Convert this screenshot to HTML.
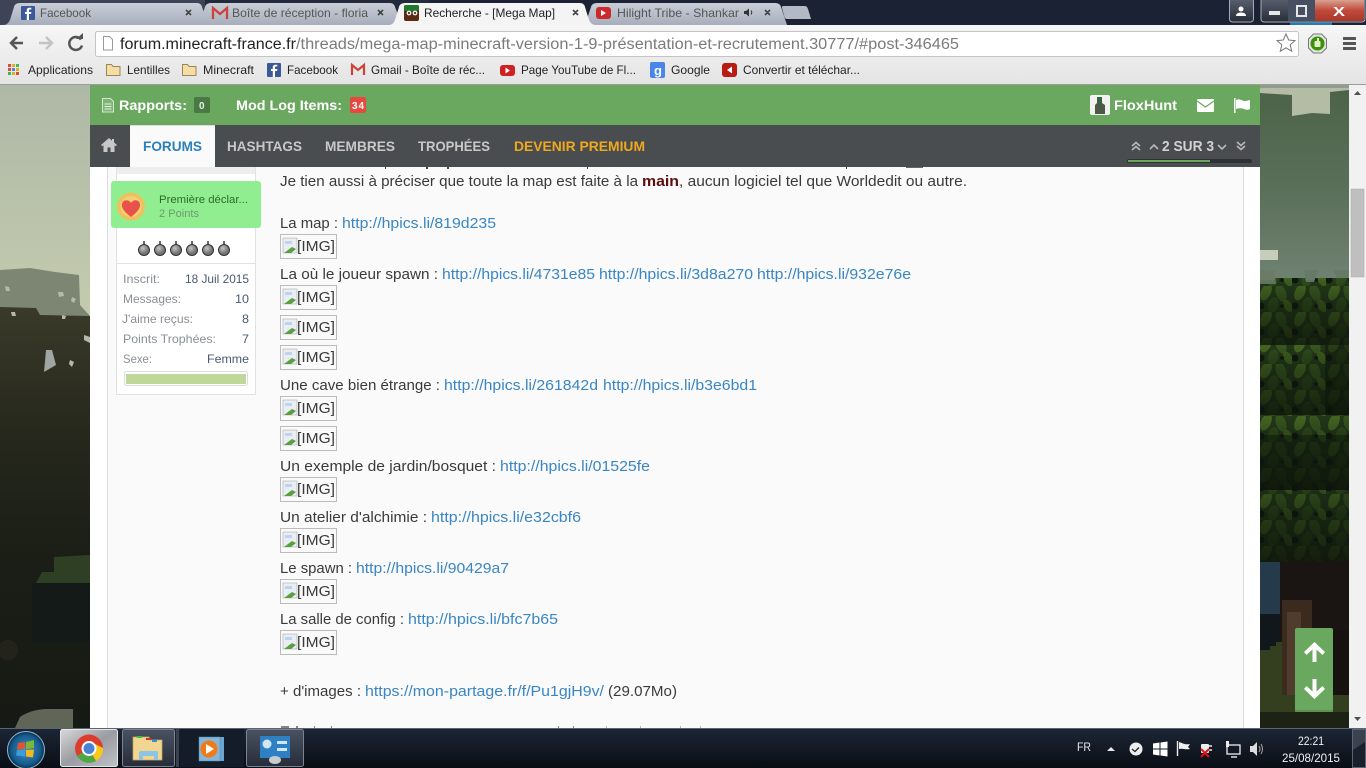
<!DOCTYPE html>
<html lang="fr"><head><meta charset="utf-8"><title>Recherche - [Mega Map]</title>
<style>
html,body{margin:0;padding:0;width:1366px;height:768px;overflow:hidden;background:#222}
svg{position:absolute;left:0;top:0;display:block}
text{font-family:"Liberation Sans","DejaVu Sans",sans-serif;white-space:pre}
.b{font-size:15px;fill:#3a3a3a}
.l{font-size:15px;fill:#3a86c2}
.s{font-size:12px;fill:#8a8f96}
.v{font-size:12px;fill:#4a5a70}
.t{font-size:12px;fill:#555}
.k{font-size:12px;fill:#222}
.h{font-size:14px;font-weight:bold;fill:#fff}
.n{font-size:14px;font-weight:bold;fill:#c8c8c8}
</style></head><body>
<svg width="1366" height="768" viewBox="0 0 1366 768" xmlns="http://www.w3.org/2000/svg">
<defs>
<linearGradient id="tab" x1="0" y1="0" x2="0" y2="1"><stop offset="0" stop-color="#c9ced8"/><stop offset="1" stop-color="#a7aebb"/></linearGradient>
<linearGradient id="tool" x1="0" y1="0" x2="0" y2="1"><stop offset="0" stop-color="#f6f6f6"/><stop offset="1" stop-color="#e4e4e4"/></linearGradient>
<linearGradient id="sky" x1="0" y1="0" x2="0" y2="1"><stop offset="0" stop-color="#aeb8a6"/><stop offset="1" stop-color="#c4cbae"/></linearGradient>
<linearGradient id="dark" x1="0" y1="0" x2="0" y2="1"><stop offset="0" stop-color="#3a3a2a"/><stop offset=".3" stop-color="#26281c"/><stop offset=".6" stop-color="#1b1e16"/><stop offset="1" stop-color="#161a14"/></linearGradient>
<linearGradient id="fog" x1="0" y1="0" x2="0" y2="1"><stop offset="0" stop-color="#4b6248"/><stop offset=".55" stop-color="#5b7059"/><stop offset="1" stop-color="#6f8272"/></linearGradient>
<linearGradient id="shade" x1="0" y1="0" x2="0" y2="1"><stop offset="0" stop-color="#0c140a" stop-opacity=".05"/><stop offset=".35" stop-color="#0c140a" stop-opacity=".4"/><stop offset="1" stop-color="#0c140a" stop-opacity=".8"/></linearGradient>
<linearGradient id="task" x1="0" y1="0" x2="0" y2="1"><stop offset="0" stop-color="#1c2635"/><stop offset="1" stop-color="#0a0e15"/></linearGradient>
<linearGradient id="tb" x1="0" y1="0" x2="1" y2="1"><stop offset="0" stop-color="#d8d8d8"/><stop offset=".5" stop-color="#9a9ca2"/><stop offset="1" stop-color="#c0c2c6"/></linearGradient>
<linearGradient id="tb2" x1="0" y1="0" x2="0" y2="1"><stop offset="0" stop-color="#4a5160"/><stop offset="1" stop-color="#262c3a"/></linearGradient>
<linearGradient id="close" x1="0" y1="0" x2="0" y2="1"><stop offset="0" stop-color="#d8a090"/><stop offset=".5" stop-color="#c2493a"/><stop offset="1" stop-color="#a8382c"/></linearGradient>
<linearGradient id="win" x1="0" y1="0" x2="0" y2="1"><stop offset="0" stop-color="#5a6270"/><stop offset="1" stop-color="#272d38"/></linearGradient>
<radialGradient id="orb"><stop offset="0" stop-color="#3f8fc8"/><stop offset=".8" stop-color="#145a8c"/><stop offset="1" stop-color="#0b2b45"/></radialGradient>
<radialGradient id="bomb" cx=".4" cy=".35"><stop offset="0" stop-color="#c4c4c4"/><stop offset="1" stop-color="#707070"/></radialGradient>
<pattern id="lp" width="34" height="26" patternUnits="userSpaceOnUse">
<rect width="34" height="26" fill="#24391a"/>
<ellipse cx="8" cy="6" rx="5" ry="9" transform="rotate(25 8 6)" fill="#476a22"/>
<ellipse cx="23" cy="7" rx="5" ry="9" transform="rotate(-20 23 7)" fill="#3a5a20"/>
<ellipse cx="15" cy="19" rx="5" ry="8" transform="rotate(15 15 19)" fill="#304e1c"/>
<ellipse cx="30" cy="20" rx="4" ry="7" transform="rotate(-30 30 20)" fill="#41621f"/>
<circle cx="3" cy="20" r="3.500" fill="#0e170d"/>
<circle cx="24" cy="20" r="2" fill="#101a0e"/>
</pattern>
<g id="ico"><rect x="0" y="0" width="14" height="15" fill="#e8eef4" stroke="#aaa" stroke-width=".6"/><path d="M1 15 L9 9 L13 11 L8 15Z" fill="#58a03c"/><path d="M2 3h7v3H2z" fill="#bcd4ee"/></g>
</defs>

<!-- background left -->
<rect x="0" y="85" width="90" height="232" fill="url(#sky)"/>
<path d="M0 270 L30 268 L55 272 L79 275 L80 305 L90 316 L0 316Z" fill="#7d8672"/>
<path d="M0 307 L36 308 L40 315 L90 316 V728 H0Z" fill="url(#dark)"/>
<path d="M46 350 L52 350 L56 365 L44 372 Z" fill="#9ea7a2"/>
<path d="M5 286l4 1 1 4-4 0z M58 292l5 0 1 4-5 1z M72 297l4 2-2 4-3-2z M11 312l4 0 1 4-4 0z M62 315l4 1-1 3-3 0z M84 335l6 2 0 6-6-3z M70 360l4 2-2 5-3-3z" fill="#b4baa9"/>
<path d="M54 557 L90 555 L90 583 L36 583 L42 572 L54 572Z" fill="#2e3f24"/>
<rect x="32" y="583" width="58" height="60" fill="#141a17"/>
<path d="M15 728 L20 717 Q30 710 45 709 L73 709 L73 728Z" fill="#5f6657"/>
<circle cx="8" cy="650" r="10" fill="#24231a"/>

<!-- background right -->
<rect x="1260" y="85" width="89" height="645" fill="#1b2418"/>
<rect x="1260" y="85" width="89" height="195" fill="url(#fog)"/>
<path d="M1260 85H1349V90L1330 92V114L1312 113L1292 116V95L1260 93Z" fill="#b5bca6"/>
<path d="M1260 85H1349V88H1260Z" fill="#8f9c8e"/>
<rect x="1260" y="250" width="18" height="10" fill="#c6cdb8"/>
<rect x="1260" y="278" width="89" height="284" fill="url(#lp)"/>
<path d="M1260 270h14l2 14-16 0z" fill="#6a7c66"/>
<path d="M1304 270h14l-4 12h-8zM1333 270h16v8h-12z" fill="#667a66"/>
<rect x="1260" y="280" width="89" height="65" fill="url(#shade)"/>
<rect x="1260" y="345" width="89" height="70" fill="url(#shade)"/>
<rect x="1325" y="345" width="24" height="70" fill="#0c140a" opacity=".5"/>
<rect x="1260" y="415" width="89" height="75" fill="url(#shade)"/>
<rect x="1260" y="435" width="89" height="55" fill="#0c140a" opacity=".45"/>
<rect x="1260" y="490" width="89" height="72" fill="url(#shade)"/>
<rect x="1260" y="490" width="89" height="72" fill="#0c140a" opacity=".25"/>
<rect x="1260" y="562" width="20" height="52" fill="#253b4c"/>
<rect x="1260" y="614" width="20" height="36" fill="#10181c"/>
<rect x="1280" y="562" width="69" height="100" fill="#1a1513"/>
<path d="M1260 650h10v-4h6v-4h6v53h67v33h-89z" fill="#343f1f"/>
<rect x="1282" y="600" width="30" height="95" fill="#3b2a1e"/>
<rect x="1287" y="612" width="14" height="83" fill="#4f3c2c"/>
<rect x="1312" y="630" width="37" height="65" fill="#17120f"/>
<rect x="1260" y="712" width="89" height="16" fill="#1c2314"/>

<!-- forum column -->
<rect x="90" y="85" width="1170" height="643" fill="#fff"/>
<rect x="108" y="167" width="1135" height="561" fill="#fafafa"/>
<rect x="107" y="167" width="1" height="561" fill="#ddd"/>
<rect x="1243" y="167" width="1" height="561" fill="#ddd"/>

<!-- sidebar card -->
<rect x="116.500" y="167.500" width="139" height="227" fill="#fff" stroke="#e2e2e2"/>
<rect x="117" y="167" width="138" height="7" fill="#eeeeee"/>
<rect x="111" y="181" width="150" height="47" rx="3" fill="#90ee90"/>
<circle cx="131" cy="206.500" r="14" fill="#edc25d"/>
<circle cx="131" cy="206.500" r="10.500" fill="#f3cf73"/>
<path d="M131 217 C122 210 122 207 122 205 C122 199 129 199 131 203 C133 199 140 199 140 205 C140 207 140 210 131 217Z" fill="#e7524c"/>
<text x="159" y="203" font-size="11" fill="#2c6a2e" textLength="89" lengthAdjust="spacingAndGlyphs">Première déclar...</text>
<text x="159" y="217" font-size="11" fill="#6f9a6f" textLength="40" lengthAdjust="spacingAndGlyphs">2 Points</text>
<g fill="url(#bomb)" stroke="#333" stroke-width="1">
<circle cx="144" cy="250" r="5.500"/><circle cx="160" cy="250" r="5.500"/><circle cx="176" cy="250" r="5.500"/><circle cx="192" cy="250" r="5.500"/><circle cx="208" cy="250" r="5.500"/><circle cx="224" cy="250" r="5.500"/>
</g>
<g stroke="#333" stroke-width="1.500"><path d="M144 244v-3M160 244v-3M176 244v-3M192 244v-3M208 244v-3M224 244v-3"/></g>
<rect x="117" y="263" width="138" height="1" fill="#e2e2e2"/>
<text class="s" x="123" y="283" textLength="37" lengthAdjust="spacingAndGlyphs">Inscrit:</text>
<text class="v" x="185" y="283" textLength="64" lengthAdjust="spacingAndGlyphs">18 Juil 2015</text>
<text class="s" x="123" y="303" textLength="58" lengthAdjust="spacingAndGlyphs">Messages:</text>
<text class="v" x="235" y="303" textLength="14" lengthAdjust="spacingAndGlyphs">10</text>
<text class="s" x="122" y="323" textLength="71" lengthAdjust="spacingAndGlyphs">J'aime reçus:</text>
<text class="v" x="242" y="323" textLength="7" lengthAdjust="spacingAndGlyphs">8</text>
<text class="s" x="123" y="343" textLength="93" lengthAdjust="spacingAndGlyphs">Points Trophées:</text>
<text class="v" x="242" y="343" textLength="7" lengthAdjust="spacingAndGlyphs">7</text>
<text class="s" x="123" y="363" textLength="29" lengthAdjust="spacingAndGlyphs">Sexe:</text>
<text class="v" x="207" y="363" textLength="42" lengthAdjust="spacingAndGlyphs">Femme</text>
<rect x="124.500" y="371.500" width="123" height="14" rx="2" fill="#fff" stroke="#ddd"/>
<rect x="126" y="374" width="120" height="10" fill="#bfd89a"/>

<!-- post text -->
<g fill="#444"><rect x="385" y="167" width="1" height="2"/><rect x="426" y="167" width="2" height="2"/><rect x="447" y="167" width="2" height="2"/><rect x="587" y="167" width="1" height="2"/><rect x="846" y="167" width="1" height="2"/></g>
<rect x="906" y="167" width="17" height="1" fill="#666"/>
<text class="b" x="280" y="186" textLength="358" lengthAdjust="spacingAndGlyphs">Je tien aussi à préciser que toute la map est faite à la</text>
<text class="b" x="642" y="186" textLength="37" lengthAdjust="spacingAndGlyphs" font-weight="bold" style="fill:#5a0f0f">main</text>
<text class="b" x="679" y="186" textLength="288" lengthAdjust="spacingAndGlyphs">, aucun logiciel tel que Worldedit ou autre.</text>

<text class="b" x="280" y="228" textLength="58" lengthAdjust="spacingAndGlyphs">La map :</text>
<text class="l" x="342" y="228" textLength="154" lengthAdjust="spacingAndGlyphs">http://hpics.li/819d235</text>
<text class="b" x="280" y="279" textLength="158" lengthAdjust="spacingAndGlyphs">La où le joueur spawn :</text>
<text class="l" x="442" y="279" textLength="153" lengthAdjust="spacingAndGlyphs">http://hpics.li/4731e85</text>
<text class="l" x="599" y="279" textLength="154" lengthAdjust="spacingAndGlyphs">http://hpics.li/3d8a270</text>
<text class="l" x="757" y="279" textLength="154" lengthAdjust="spacingAndGlyphs">http://hpics.li/932e76e</text>
<text class="b" x="280" y="390" textLength="160" lengthAdjust="spacingAndGlyphs">Une cave bien étrange :</text>
<text class="l" x="444" y="390" textLength="154" lengthAdjust="spacingAndGlyphs">http://hpics.li/261842d</text>
<text class="l" x="603" y="390" textLength="154" lengthAdjust="spacingAndGlyphs">http://hpics.li/b3e6bd1</text>
<text class="b" x="280" y="471" textLength="216" lengthAdjust="spacingAndGlyphs">Un exemple de jardin/bosquet :</text>
<text class="l" x="500" y="471" textLength="150" lengthAdjust="spacingAndGlyphs">http://hpics.li/01525fe</text>
<text class="b" x="280" y="522" textLength="147" lengthAdjust="spacingAndGlyphs">Un atelier d'alchimie :</text>
<text class="l" x="431" y="522" textLength="150" lengthAdjust="spacingAndGlyphs">http://hpics.li/e32cbf6</text>
<text class="b" x="280" y="573" textLength="72" lengthAdjust="spacingAndGlyphs">Le spawn :</text>
<text class="l" x="356" y="573" textLength="153" lengthAdjust="spacingAndGlyphs">http://hpics.li/90429a7</text>
<text class="b" x="280" y="624" textLength="124" lengthAdjust="spacingAndGlyphs">La salle de config :</text>
<text class="l" x="408" y="624" textLength="150" lengthAdjust="spacingAndGlyphs">http://hpics.li/bfc7b65</text>
<text class="b" x="280" y="696" textLength="81" lengthAdjust="spacingAndGlyphs">+ d'images :</text>
<text class="l" x="365" y="696" textLength="239" lengthAdjust="spacingAndGlyphs">https://mon-partage.fr/f/Pu1gjH9v/</text>
<text class="b" x="608" y="696" textLength="69" lengthAdjust="spacingAndGlyphs">(29.07Mo)</text>
<g fill="#555" opacity=".7"><rect x="281" y="726" width="8" height="2"/><rect x="296" y="726" width="2" height="2"/><rect x="314" y="726" width="1" height="2"/><rect x="331" y="726" width="1" height="2"/><rect x="558" y="726" width="1" height="2"/><rect x="573" y="726" width="1" height="2"/></g>
<g fill="#9abbd8"><rect x="606" y="726" width="1" height="2"/><rect x="640" y="726" width="1" height="2"/><rect x="680" y="726" width="1" height="2"/><rect x="700" y="726" width="1" height="2"/></g>

<!-- broken images -->
<g id="imgs">
<g transform="translate(0,234)"><rect x="280.500" y=".5" width="56" height="24" fill="#fafafa" stroke="#bbb"/><use href="#ico" x="283" y="4"/><text class="b" x="297" y="17" textLength="38" lengthAdjust="spacingAndGlyphs">[IMG]</text></g>
<g transform="translate(0,285)"><rect x="280.500" y=".5" width="56" height="24" fill="#fafafa" stroke="#bbb"/><use href="#ico" x="283" y="4"/><text class="b" x="297" y="17" textLength="38" lengthAdjust="spacingAndGlyphs">[IMG]</text></g>
<g transform="translate(0,315)"><rect x="280.500" y=".5" width="56" height="24" fill="#fafafa" stroke="#bbb"/><use href="#ico" x="283" y="4"/><text class="b" x="297" y="17" textLength="38" lengthAdjust="spacingAndGlyphs">[IMG]</text></g>
<g transform="translate(0,345)"><rect x="280.500" y=".5" width="56" height="24" fill="#fafafa" stroke="#bbb"/><use href="#ico" x="283" y="4"/><text class="b" x="297" y="17" textLength="38" lengthAdjust="spacingAndGlyphs">[IMG]</text></g>
<g transform="translate(0,396)"><rect x="280.500" y=".5" width="56" height="24" fill="#fafafa" stroke="#bbb"/><use href="#ico" x="283" y="4"/><text class="b" x="297" y="17" textLength="38" lengthAdjust="spacingAndGlyphs">[IMG]</text></g>
<g transform="translate(0,426)"><rect x="280.500" y=".5" width="56" height="24" fill="#fafafa" stroke="#bbb"/><use href="#ico" x="283" y="4"/><text class="b" x="297" y="17" textLength="38" lengthAdjust="spacingAndGlyphs">[IMG]</text></g>
<g transform="translate(0,477)"><rect x="280.500" y=".5" width="56" height="24" fill="#fafafa" stroke="#bbb"/><use href="#ico" x="283" y="4"/><text class="b" x="297" y="17" textLength="38" lengthAdjust="spacingAndGlyphs">[IMG]</text></g>
<g transform="translate(0,528)"><rect x="280.500" y=".5" width="56" height="24" fill="#fafafa" stroke="#bbb"/><use href="#ico" x="283" y="4"/><text class="b" x="297" y="17" textLength="38" lengthAdjust="spacingAndGlyphs">[IMG]</text></g>
<g transform="translate(0,579)"><rect x="280.500" y=".5" width="56" height="24" fill="#fafafa" stroke="#bbb"/><use href="#ico" x="283" y="4"/><text class="b" x="297" y="17" textLength="38" lengthAdjust="spacingAndGlyphs">[IMG]</text></g>
<g transform="translate(0,630)"><rect x="280.500" y=".5" width="56" height="24" fill="#fafafa" stroke="#bbb"/><use href="#ico" x="283" y="4"/><text class="b" x="297" y="17" textLength="38" lengthAdjust="spacingAndGlyphs">[IMG]</text></g>
</g>

<!-- green header -->
<rect x="90" y="85" width="1170" height="40" fill="#6aa75f"/>
<path d="M102.500 98.500h8l3 3v10.500h-11z" fill="#7fb574" stroke="#d5e6d0"/>
<path d="M104.500 104h7M104.500 106.500h7M104.500 109h7" stroke="#e6f0e3" stroke-width="1"/>
<text class="h" x="119" y="110" textLength="68" lengthAdjust="spacingAndGlyphs">Rapports:</text>
<rect x="194" y="97" width="16" height="16" rx="2" fill="#4a7a44"/>
<text x="199" y="109" font-size="10" font-weight="bold" fill="#e8f0e6">0</text>
<text class="h" x="236" y="110" textLength="106" lengthAdjust="spacingAndGlyphs">Mod Log Items:</text>
<rect x="350" y="97" width="16" height="16" rx="2" fill="#e8493e"/>
<text x="352" y="109" font-size="10" font-weight="bold" fill="#fff" textLength="12">34</text>
<rect x="1090" y="95" width="20" height="20" rx="2" fill="#f2f2f2"/>
<path d="M1097 97h5v6l3 2v9h-10v-9l2-2z" fill="#4a5a44"/>
<rect x="1098" y="97" width="3" height="5" fill="#2d6b3a"/>
<text class="h" x="1114" y="110" textLength="63" lengthAdjust="spacingAndGlyphs">FloxHunt</text>
<rect x="1197" y="99" width="17" height="13" rx="1" fill="#fff"/>
<path d="M1197 101l8.500 6 8.500-6" fill="none" stroke="#6aa75f" stroke-width="1.200"/>
<rect x="1234" y="98" width="1.500" height="15" fill="#fff"/>
<path d="M1236 100c4-2 6 1 9 1 2 0 4-1 5-1v9c-2 1-4 1-6 0-3-1-5-1-8 0z" fill="#fff"/>

<!-- nav -->
<rect x="90" y="125" width="1170" height="42" fill="#4a4d50"/>
<path d="M109 138l-8 7 1.300 1.200 1.200-1v6.800h4v-4.500h3v4.500h4v-6.800l1.200 1 1.300-1.200-3-2.600v-3.400h-2v1.700z" fill="#c8c8c8"/>
<rect x="130" y="125" width="85" height="42" fill="#fafafa"/>
<rect x="130" y="125" width="85" height="1" fill="#ddd"/>
<text class="n" x="143" y="151" textLength="59" lengthAdjust="spacingAndGlyphs" style="fill:#2b7fbe">FORUMS</text>
<text class="n" x="227" y="151" textLength="75" lengthAdjust="spacingAndGlyphs">HASHTAGS</text>
<text class="n" x="325" y="151" textLength="70" lengthAdjust="spacingAndGlyphs">MEMBRES</text>
<text class="n" x="418" y="151" textLength="72" lengthAdjust="spacingAndGlyphs">TROPHÉES</text>
<text class="n" x="514" y="151" textLength="131" lengthAdjust="spacingAndGlyphs" style="fill:#f0a81e">DEVENIR PREMIUM</text>
<g fill="none" stroke="#b8b8b8" stroke-width="1.600">
<path d="M1132 146l4-3.500 4 3.500M1132 150l4-3.500 4 3.500"/>
<path d="M1150 149l4-4 4 4"/>
<path d="M1218 145l4 4 4-4"/>
<path d="M1237 142l4 3.500 4-3.500M1237 146l4 3.500 4-3.500"/>
</g>
<text x="1162" y="151" font-size="14.500" font-weight="bold" fill="#d2d2d2" textLength="52" lengthAdjust="spacingAndGlyphs">2 SUR 3</text>
<rect x="1127" y="159" width="125" height="4" rx="2" fill="#2f3234"/>
<rect x="1128" y="160" width="82" height="2" fill="#6aa75f"/>

<!-- up/down button -->
<rect x="1295" y="628" width="38" height="84" rx="2" fill="#6aa75f"/>
<rect x="1295" y="710" width="38" height="2" fill="#5c9152"/>
<path d="M1314.500 642l-10.500 10 2.500 3 6-5.500v12.500h4v-12.500l6 5.500 2.500-3z" fill="#fff"/>
<path d="M1314.500 699l-10.500-10 2.500-3 6 5.500v-12.500h4v12.500l6-5.500 2.500 3z" fill="#fff"/>

<!-- scrollbar -->
<rect x="1349" y="85" width="17" height="643" fill="#f1f1f1"/>
<rect x="1351" y="189" width="13" height="88" fill="#bfbfbf" stroke="#aaa" stroke-width=".5"/>
<path d="M1354 95l3.500-4 3.500 4z" fill="#505050"/>
<path d="M1354 717l3.500 4 3.500-4z" fill="#505050"/>

<!-- browser top -->
<rect x="0" y="0" width="1366" height="25" fill="#1a2233"/>
<path d="M0 0H205V25H0Z" fill="#3c4456"/>
<path d="M205 0H430V25H205Z" fill="#232a3c"/>
<path d="M3 25Q8 25 10 20L14 7Q15 3 20 3H197Q201 3 202 7L208 25Z" fill="url(#tab)"/>
<path d="M199 25L205 7Q206 3 211 3H390Q394 3 395 7L402 25Z" fill="url(#tab)"/>
<path d="M585 25L591 7Q592 3 597 3H775Q780 3 781 7L787 25Z" fill="url(#tab)"/>
<path d="M783 6h22q2 0 3 3l3 10h-24q-2 0-2.500-2l-2.500-9q0-2 1-2z" fill="#b4bac5"/>
<path d="M389 25Q393 25 395 20L399 7Q400 3 405 3H580Q584 3 585 7L589 20Q591 25 596 25Z" fill="#f4f4f4"/>
<rect x="21" y="6" width="14" height="14" rx="1" fill="#3b5998"/><path d="M29 20v-6h2l.4-2H29v-1.500c0-.7.3-1 1-1h1.300V7.700H29.500c-1.800 0-2.700 1-2.700 2.700V12H25v2h1.800v6z" fill="#fff"/>
<text class="t" x="40" y="17" textLength="51" lengthAdjust="spacingAndGlyphs">Facebook</text>
<path d="M186 10l5 5M191 10l-5 5M378 10l5 5M383 10l-5 5M573 10l5 5M578 10l-5 5M765 10l5 5M770 10l-5 5" stroke="#444" stroke-width="1.600"/>
<path d="M213 19V8l7 6 7-6v11" fill="none" stroke="#c9433a" stroke-width="2.300"/>
<text class="t" x="232" y="17" textLength="136" lengthAdjust="spacingAndGlyphs">Boîte de réception - floria</text>
<rect x="404" y="5" width="15" height="16" rx="2" fill="#5c2a12"/><rect x="404" y="5" width="15" height="6" rx="2" fill="#1f7a2e"/><circle cx="409" cy="13" r="2.400" fill="#eee"/><circle cx="415" cy="13" r="2.400" fill="#eee"/><circle cx="409" cy="13" r="1" fill="#111"/><circle cx="415" cy="13" r="1" fill="#111"/>
<text class="k" x="424" y="17" textLength="131" lengthAdjust="spacingAndGlyphs">Recherche - [Mega Map]</text>
<rect x="596" y="7" width="15" height="12" rx="3" fill="#cc2a2a"/><path d="M601 10l5 3-5 3z" fill="#fff"/>
<text class="t" x="617" y="17" textLength="122" lengthAdjust="spacingAndGlyphs">Hilight Tribe - Shankar</text>
<path d="M744 11h2l3-2.500v8l-3-2.500h-2z" fill="#333"/><path d="M751 10.500q1.500 2 0 4" stroke="#333" fill="none"/>

<!-- window buttons -->
<rect x="1229.500" y="-2" width="24" height="24" rx="3" fill="url(#win)" stroke="#a5abb5"/>
<circle cx="1241" cy="9" r="2.500" fill="#fff"/><path d="M1236 16q0-3.500 5-3.500t5 3.500z" fill="#fff"/>
<rect x="1261" y="-2" width="104" height="24" rx="3" fill="url(#win)" stroke="#a5abb5"/>
<rect x="1288" y="0" width="27" height="21" fill="#465062"/>
<rect x="1315" y="0" width="49" height="21" fill="url(#close)"/>
<rect x="1290" y="22" width="42" height="3" fill="#3f9bd8" opacity=".7"/>
<rect x="1269" y="11" width="11" height="4" fill="#e6e6e6"/>
<rect x="1297" y="6" width="9" height="10" fill="none" stroke="#e6e6e6" stroke-width="2"/>
<text x="1333" y="16" font-size="13" font-weight="bold" fill="#fff" textLength="12" lengthAdjust="spacingAndGlyphs">X</text>

<!-- toolbar -->
<rect x="0" y="25" width="1366" height="59" fill="url(#tool)"/>
<rect x="0" y="84" width="1366" height="1" fill="#9d9d9d"/>
<path d="M23 43H12M17 37l-6 6 6 6" fill="none" stroke="#555" stroke-width="2.500"/>
<path d="M39 43h11M46 37l6 6-6 6" fill="none" stroke="#c4c4c4" stroke-width="2.500"/>
<path d="M81 39.500a6.500 6.500 0 1 0 1 6" fill="none" stroke="#555" stroke-width="2.500"/><path d="M76 39h7v-6z" fill="#555"/>
<rect x="95.500" y="31.500" width="1203" height="25" rx="2" fill="#fff" stroke="#c4c4c4"/>
<path d="M103.500 36.500h6l3 3v10.500h-9z" fill="#fff" stroke="#999"/>
<text x="120" y="49" font-size="15.500" fill="#222" textLength="176" lengthAdjust="spacingAndGlyphs">forum.minecraft-france.fr</text>
<text x="296" y="49" font-size="15.500" fill="#7b7b7b" textLength="663" lengthAdjust="spacingAndGlyphs">/threads/mega-map-minecraft-version-1-9-présentation-et-recrutement.30777/#post-346465</text>
<path d="M1286 34l2.700 6 6.300.6-4.800 4.200 1.500 6.400-5.700-3.400-5.700 3.400 1.500-6.400-4.800-4.200 6.300-.6z" fill="#fff" stroke="#777"/>
<path d="M1313.500 34h8l5 5v9l-5 5h-8l-5-5v-9z" fill="#dfe8d9" stroke="#777"/>
<circle cx="1317.500" cy="43.500" r="7" fill="#3f8f0f"/><rect x="1314.500" y="41" width="6" height="6" rx="1" fill="#dff2c4"/><rect x="1317" y="38" width="2" height="4" fill="#dff2c4"/>
<rect x="1343" y="37" width="13" height="3" rx=".5" fill="#555"/><rect x="1343" y="42" width="13" height="3" rx=".5" fill="#555"/><rect x="1343" y="47" width="13" height="3" rx=".5" fill="#555"/>

<!-- bookmarks -->
<g>
<rect x="8" y="64" width="3" height="3" fill="#dd4b39"/><rect x="12" y="64" width="3" height="3" fill="#e0b020"/><rect x="16" y="64" width="3" height="3" fill="#3cba54"/>
<rect x="8" y="68" width="3" height="3" fill="#dd4b39"/><rect x="12" y="68" width="3" height="3" fill="#4885ed"/><rect x="16" y="68" width="3" height="3" fill="#e0b020"/>
<rect x="8" y="72" width="3" height="3" fill="#3cba54"/><rect x="12" y="72" width="3" height="3" fill="#e0b020"/><rect x="16" y="72" width="3" height="3" fill="#dd4b39"/>
</g>
<text class="k" x="28" y="74" textLength="65" lengthAdjust="spacingAndGlyphs">Applications</text>
<path d="M106.500 64.500h5l1.500 2h7v9h-13.500z" fill="#f5dda6" stroke="#9c8656"/>
<text class="k" x="127" y="74" textLength="43" lengthAdjust="spacingAndGlyphs">Lentilles</text>
<path d="M182.500 64.500h5l1.500 2h7v9h-13.500z" fill="#f5dda6" stroke="#9c8656"/>
<text class="k" x="203" y="74" textLength="51" lengthAdjust="spacingAndGlyphs">Minecraft</text>
<rect x="267" y="63" width="14" height="14" rx="1" fill="#3b5998"/><path d="M275 77v-6h2l.4-2H275v-1.500c0-.7.3-1 1-1h1.300V64.700H275.500c-1.800 0-2.700 1-2.700 2.700V69H271v2h1.800v6z" fill="#fff"/>
<text class="k" x="287" y="74" textLength="51" lengthAdjust="spacingAndGlyphs">Facebook</text>
<path d="M352 75V65l6 5 6-5v10" fill="none" stroke="#c9433a" stroke-width="2.200"/>
<text class="k" x="371" y="74" textLength="114" lengthAdjust="spacingAndGlyphs">Gmail - Boîte de réc...</text>
<rect x="500" y="65" width="15" height="11" rx="3" fill="#cc2222"/><path d="M505.500 67.500l4.500 3-4.500 3z" fill="#fff"/>
<text class="k" x="521" y="74" textLength="115" lengthAdjust="spacingAndGlyphs">Page YouTube de Fl...</text>
<rect x="650" y="62" width="15" height="16" rx="2" fill="#4a86e8"/><text x="654" y="75" font-size="13" font-weight="bold" fill="#fff">g</text>
<text class="k" x="671" y="74" textLength="39" lengthAdjust="spacingAndGlyphs">Google</text>
<rect x="722" y="63" width="15" height="14" rx="3" fill="#b81c12"/><path d="M732 66.500v7l-5-3.500z" fill="#fff"/>
<text class="k" x="743" y="74" textLength="117" lengthAdjust="spacingAndGlyphs">Convertir et téléchar...</text>

<!-- taskbar -->
<rect x="0" y="728" width="1366" height="40" fill="url(#task)"/>
<rect x="0" y="728" width="1366" height="1" fill="#5b6472"/>
<circle cx="26" cy="750" r="18.500" fill="url(#orb)" stroke="#8fb7d4" stroke-width="1"/>
<path d="M18 743l7-1v7l-8 .5z" fill="#e8532b"/><path d="M26 742l8-2v8l-8 1z" fill="#7db73a"/><path d="M17 750l8-.5v7l-9-1z" fill="#3c9ddc"/><path d="M26 750l8-.5-1 8-7-1z" fill="#f3b81f"/>
<rect x="60.500" y="729.500" width="57" height="37" rx="2" fill="url(#tb)" stroke="#e6e6e6"/>
<circle cx="89" cy="748.500" r="14" fill="#dc3d2f"/>
<path d="M89 748.500 L77 756 A14 14 0 0 0 96 761Z" fill="#4ea745"/>
<path d="M89 748.500 L96 761 A14 14 0 0 0 103 748 L89 741Z" fill="#f6c91b"/>
<circle cx="89" cy="748.500" r="6.500" fill="#4a82d6" stroke="#fff" stroke-width="2"/>
<rect x="122.500" y="729.500" width="52" height="37" rx="2" fill="url(#tb2)" stroke="#7b8290"/>
<path d="M133 737h16l1 3h12v20h-29z" fill="#f0d690" stroke="#c7a860" stroke-width=".7"/>
<rect x="137" y="736" width="5" height="2" fill="#3cc040"/><rect x="146" y="738" width="5" height="2" fill="#d03030"/><rect x="152" y="740" width="5" height="2" fill="#3090e0"/>
<path d="M139 760v-7q0-2 2-2h15q2 0 2 2v7h-4v-4h-11v4z" fill="#8cc4e6"/>
<rect x="176" y="729" width="3" height="38" fill="#39404e"/>
<rect x="180" y="729" width="64" height="38" fill="#151c29"/>
<rect x="199" y="737" width="25" height="24" fill="#6aa7d0"/>
<rect x="199" y="737" width="21" height="24" fill="#85b6d8" stroke="#4d8ab5" stroke-width=".5"/>
<circle cx="209" cy="749" r="8.500" fill="#f07a16"/><path d="M206 744l8 5-8 5z" fill="#fff"/>
<rect x="246.500" y="729.500" width="57" height="37" rx="2" fill="url(#tb2)" stroke="#7b8290"/>
<rect x="260" y="736" width="30" height="22" fill="#2e7fc4"/>
<circle cx="267" cy="744" r="4.500" fill="#cfe6f5"/><rect x="277" y="741" width="10" height="3" fill="#cfe6f5"/><rect x="277" y="748" width="10" height="3" fill="#cfe6f5"/>
<ellipse cx="275" cy="760" rx="6" ry="4" fill="#c8ccd0"/>

<!-- tray -->
<text x="1077" y="751" font-size="12" fill="#e6e6e6" textLength="14" lengthAdjust="spacingAndGlyphs">FR</text>
<path d="M1107 751l4-4 4 4z" fill="#e6e6e6"/>
<circle cx="1136" cy="749" r="6.500" fill="#eee"/><path d="M1132 749l3 2.500 4-4" stroke="#222" fill="none" stroke-width="1.300"/>
<path d="M1153 743.500l6.500-1v6h-6.500zM1160.500 742.500l7-1v7h-7zM1153 749.500h6.500v6l-6.500-1zM1160.500 749.500h7v7l-7-1z" fill="#fff"/>
<path d="M1177.500 741v15" stroke="#eee" stroke-width="1.400"/><path d="M1179 742c4 1 5 3 11 2l-2 3 2 2c-5 1-7-1-11 0z" fill="#eee"/>
<rect x="1201" y="744" width="8" height="9" fill="#eee" rx="1"/><path d="M1209 746h3M1209 750h3" stroke="#eee" stroke-width="1.500"/>
<path d="M1201 749l8 8M1209 749l-8 8" stroke="#e01010" stroke-width="2"/>
<rect x="1227" y="745" width="13" height="9" fill="none" stroke="#eee" stroke-width="1.300"/><rect x="1226" y="741" width="3" height="6" fill="#eee"/><path d="M1231 757h6" stroke="#eee" stroke-width="1.400"/>
<path d="M1250 746h3l4-4v14l-4-4h-3z" fill="#ddd"/><path d="M1259 746q2 3 0 6M1261 744q3 5 0 10" stroke="#aaa" fill="none"/>
<text x="1298" y="745" font-size="12" fill="#f0f0f0" textLength="26" lengthAdjust="spacingAndGlyphs">22:21</text>
<text x="1282" y="762" font-size="12" fill="#f0f0f0" textLength="58" lengthAdjust="spacingAndGlyphs">25/08/2015</text>
<rect x="1352.500" y="729.500" width="13" height="38" fill="#1a212c" stroke="#5b6472"/>
<path d="M1353 730h12v12l-12 8z" fill="#3a424f"/>
</svg>
</body></html>
